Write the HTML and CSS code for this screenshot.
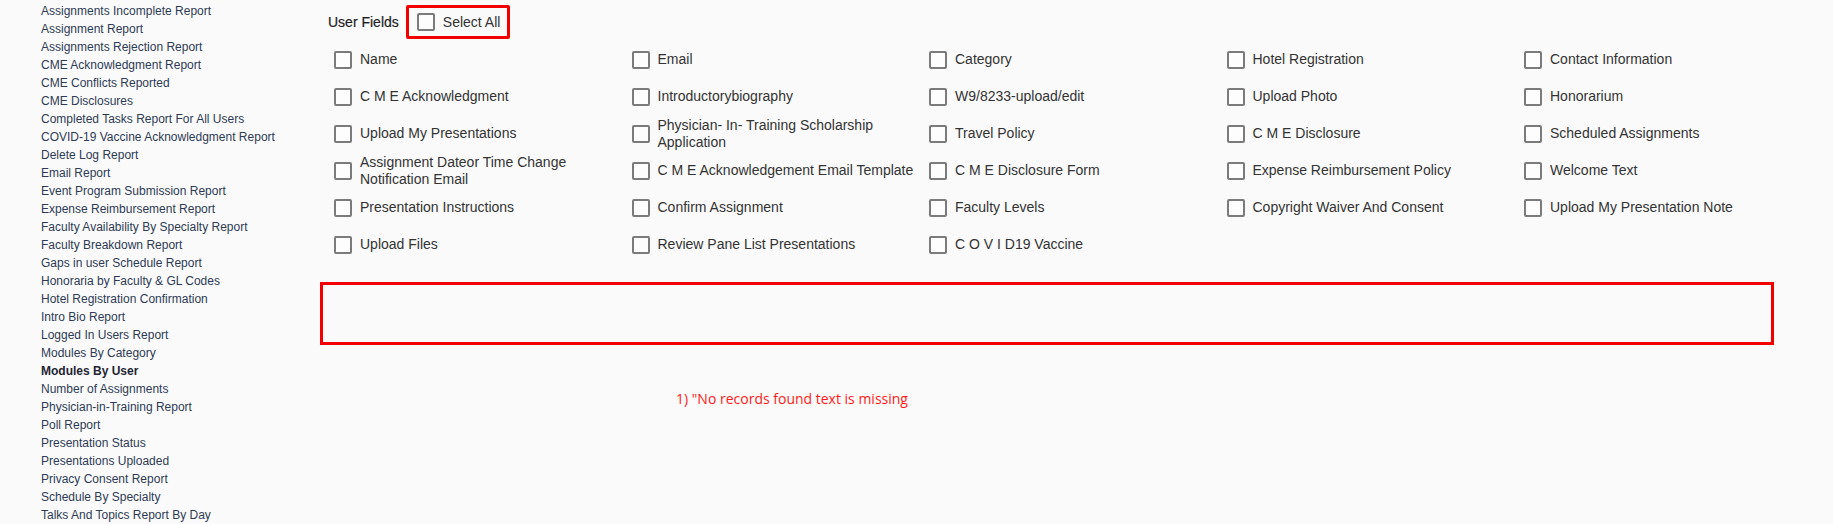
FILE: index.html
```html
<!DOCTYPE html>
<html>
<head>
<meta charset="utf-8">
<link rel="stylesheet" href="styles.css">
</head>
<body>
<div class="page">
  <nav class="sidebar">
    <a class="nav-item">Assignments Incomplete Report</a>
    <a class="nav-item">Assignment Report</a>
    <a class="nav-item">Assignments Rejection Report</a>
    <a class="nav-item">CME Acknowledgment Report</a>
    <a class="nav-item">CME Conflicts Reported</a>
    <a class="nav-item">CME Disclosures</a>
    <a class="nav-item">Completed Tasks Report For All Users</a>
    <a class="nav-item">COVID-19 Vaccine Acknowledgment Report</a>
    <a class="nav-item">Delete Log Report</a>
    <a class="nav-item">Email Report</a>
    <a class="nav-item">Event Program Submission Report</a>
    <a class="nav-item">Expense Reimbursement Report</a>
    <a class="nav-item">Faculty Availability By Specialty Report</a>
    <a class="nav-item">Faculty Breakdown Report</a>
    <a class="nav-item">Gaps in user Schedule Report</a>
    <a class="nav-item">Honoraria by Faculty &amp; GL Codes</a>
    <a class="nav-item">Hotel Registration Confirmation</a>
    <a class="nav-item">Intro Bio Report</a>
    <a class="nav-item">Logged In Users Report</a>
    <a class="nav-item">Modules By Category</a>
    <a class="nav-item active">Modules By User</a>
    <a class="nav-item">Number of Assignments</a>
    <a class="nav-item">Physician-in-Training Report</a>
    <a class="nav-item">Poll Report</a>
    <a class="nav-item">Presentation Status</a>
    <a class="nav-item">Presentations Uploaded</a>
    <a class="nav-item">Privacy Consent Report</a>
    <a class="nav-item">Schedule By Specialty</a>
    <a class="nav-item">Talks And Topics Report By Day</a>
  </nav>
  <main class="main">
    <div class="fields-header">
      <span class="fields-title">User Fields</span>
      <label class="select-all">
        <input type="checkbox" class="cb">
        <span>Select All</span>
      </label>
    </div>
    <div class="fields-grid">
      <label class="field"><input type="checkbox" class="cb"><span>Name</span></label>
      <label class="field"><input type="checkbox" class="cb"><span>Email</span></label>
      <label class="field"><input type="checkbox" class="cb"><span>Category</span></label>
      <label class="field"><input type="checkbox" class="cb"><span>Hotel Registration</span></label>
      <label class="field"><input type="checkbox" class="cb"><span>Contact Information</span></label>

      <label class="field"><input type="checkbox" class="cb"><span>C M E Acknowledgment</span></label>
      <label class="field"><input type="checkbox" class="cb"><span>Introductorybiography</span></label>
      <label class="field"><input type="checkbox" class="cb"><span>W9/8233-upload/edit</span></label>
      <label class="field"><input type="checkbox" class="cb"><span>Upload Photo</span></label>
      <label class="field"><input type="checkbox" class="cb"><span>Honorarium</span></label>

      <label class="field"><input type="checkbox" class="cb"><span>Upload My Presentations</span></label>
      <label class="field"><input type="checkbox" class="cb"><span>Physician- In- Training Scholarship Application</span></label>
      <label class="field"><input type="checkbox" class="cb"><span>Travel Policy</span></label>
      <label class="field"><input type="checkbox" class="cb"><span>C M E Disclosure</span></label>
      <label class="field"><input type="checkbox" class="cb"><span>Scheduled Assignments</span></label>

      <label class="field"><input type="checkbox" class="cb"><span>Assignment Dateor Time Change Notification Email</span></label>
      <label class="field"><input type="checkbox" class="cb"><span>C M E Acknowledgement Email Template</span></label>
      <label class="field"><input type="checkbox" class="cb"><span>C M E Disclosure Form</span></label>
      <label class="field"><input type="checkbox" class="cb"><span>Expense Reimbursement Policy</span></label>
      <label class="field"><input type="checkbox" class="cb"><span>Welcome Text</span></label>

      <label class="field"><input type="checkbox" class="cb"><span>Presentation Instructions</span></label>
      <label class="field"><input type="checkbox" class="cb"><span>Confirm Assignment</span></label>
      <label class="field"><input type="checkbox" class="cb"><span>Faculty Levels</span></label>
      <label class="field"><input type="checkbox" class="cb"><span>Copyright Waiver And Consent</span></label>
      <label class="field"><input type="checkbox" class="cb"><span>Upload My Presentation Note</span></label>

      <label class="field"><input type="checkbox" class="cb"><span>Upload Files</span></label>
      <label class="field"><input type="checkbox" class="cb"><span>Review Pane List Presentations</span></label>
      <label class="field"><input type="checkbox" class="cb"><span>C O V I D19 Vaccine</span></label>
    </div>
    <div class="results-box"></div>
    <p class="note">1) "No records found text is missing</p>
  </main>
</div>
</body>
</html>
```

FILE: styles.css
```css
* {
  box-sizing: border-box;
}

html, body {
  margin: 0;
  padding: 0;
  background: #fafafa;
}

body {
  font-family: "Liberation Sans", Arial, sans-serif;
  height: 524px;
  overflow: hidden;
}

.page {
  display: flex;
  align-items: flex-start;
}

.sidebar {
  width: 300px;
  flex: none;
  padding: 2px 0 0 41px;
  display: flex;
  flex-direction: column;
}

.nav-item {
  font-size: 12px;
  line-height: 18px;
  height: 18px;
  color: #2e3b55;
  white-space: nowrap;
  text-decoration: none;
}

.nav-item.active {
  font-weight: bold;
  color: #1f2533;
}

.main {
  flex: 1;
  padding-left: 20px;
}

.fields-header {
  display: flex;
  align-items: center;
  margin-top: 5px;
  height: 34px;
  padding-left: 8px;
  gap: 7px;
}

.fields-title {
  font-size: 14px;
  color: #1e1e1e;
  -webkit-text-stroke: 0.2px #1e1e1e;
}

.select-all {
  display: flex;
  align-items: center;
  gap: 8px;
  height: 34px;
  padding: 0 7px 0 8px;
  border: 3px solid #f20000;
  border-radius: 2px;
  font-size: 14px;
  color: #333;
}

.cb {
  appearance: none;
  -webkit-appearance: none;
  margin: 0;
  flex: none;
  width: 18px;
  height: 18px;
  border: 2px solid #7b7b7b;
  border-radius: 2px;
  background: #fdfdfd;
}

.fields-grid {
  display: grid;
  grid-template-columns: repeat(5, 297.5px);
  grid-auto-rows: 37px;
  margin: 2px 0 0 14px;
}

.field {
  display: flex;
  align-items: center;
  gap: 8px;
  font-size: 14px;
  line-height: 17px;
  color: #333;
}

.results-box {
  margin-top: 19px;
  width: 1454px;
  height: 63px;
  border: 3px solid #f20000;
}

.note {
  margin: 46px 0 0 356px;
  font-family: "Open Sans", Lato, sans-serif;
  font-size: 14px;
  line-height: 16px;
  color: #ff1a1a;
}
```
